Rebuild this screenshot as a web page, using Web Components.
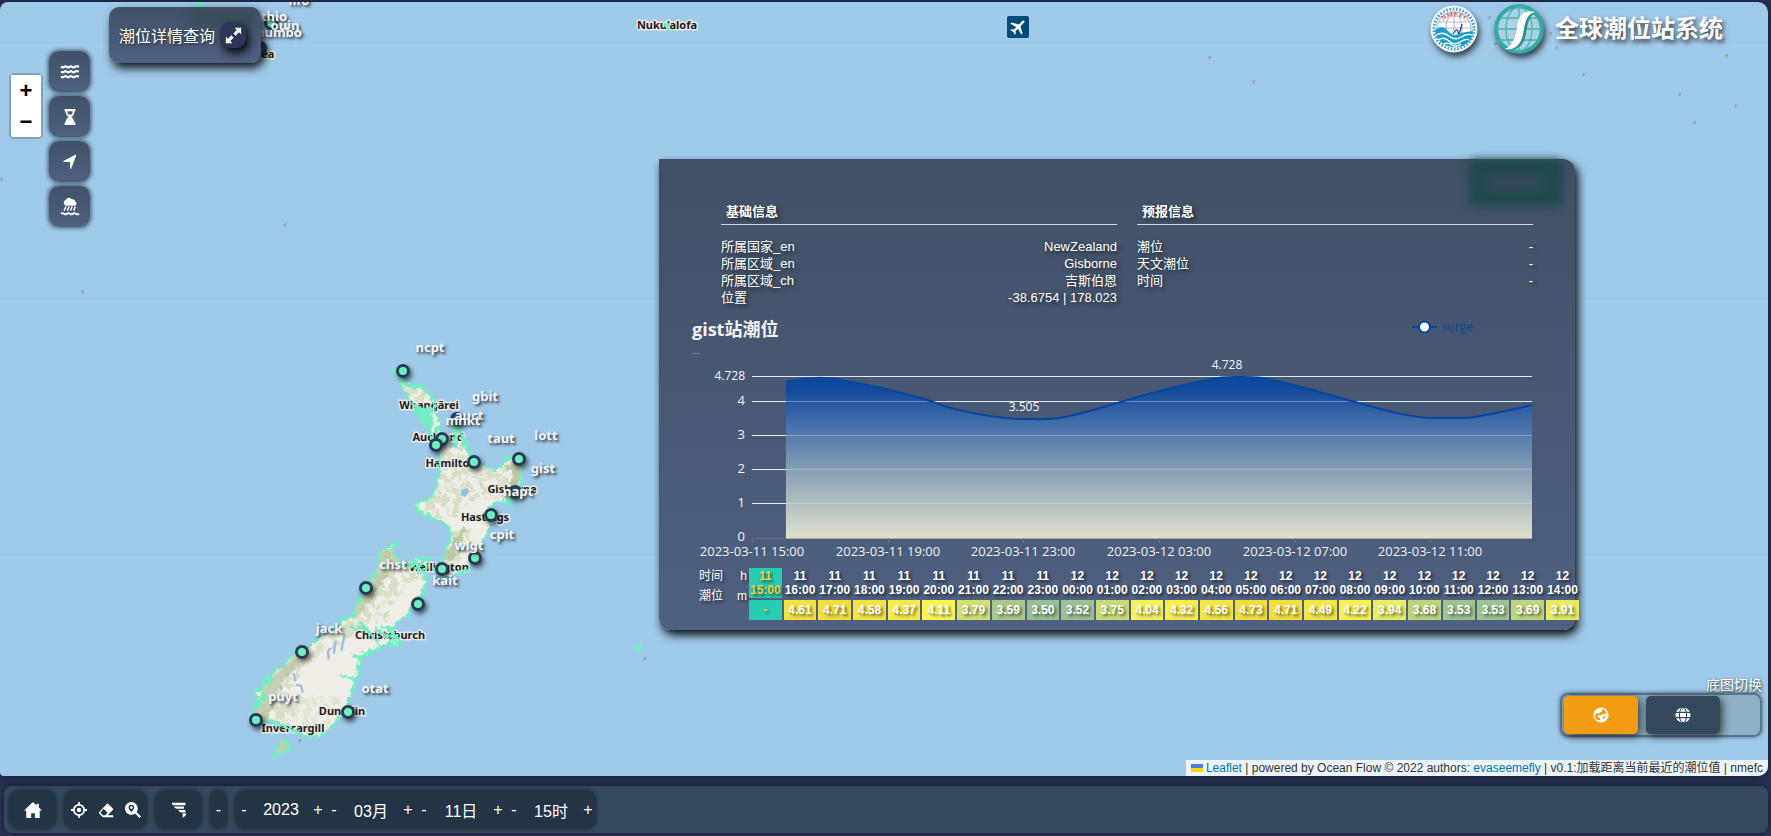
<!DOCTYPE html>
<html lang="zh-CN">
<head>
<meta charset="utf-8">
<title>全球潮位站系统</title>
<style>
  body { margin: 0; background: #2b3355; font-family: "Liberation Sans", "Noto Sans CJK SC", sans-serif; color: #fff; overflow: hidden; }
</style>
</head>
<body>
<tide-app></tide-app>
<script>
const ICONS = {
  waves: '<g fill="none" stroke="#fff" stroke-width="2.400"><path d="M0 4q2 1.800 4 0 1-.8 2 0 2 1.800 4 0 1-.8 2 0 2 1.800 4 0 1-.8 4 0"/><path d="M0 9.500q2 1.800 4 0 1-.8 2 0 2 1.800 4 0 1-.8 2 0 2 1.800 4 0 1-.8 4 0"/><path d="M0 15q2 1.800 4 0 1-.8 2 0 2 1.800 4 0 1-.8 2 0 2 1.800 4 0 1-.8 4 0"/></g>',
  hourglass: '<path fill="#fff" d="M4 1h12v2.500h-1c0 3-1.500 5-3.500 6.500 2 1.500 3.500 3.500 3.500 6.500h1V19H4v-2.500h1c0-3 1.500-5 3.500-6.500C6.500 8.500 5 6.500 5 3.500H4zM7 3.500c0 1.500.5 2.700 1.200 3.700h3.600c.7-1 1.200-2.200 1.200-3.700z"/>',
  arrow: '<path fill="#fff" d="M17 2.500 11.500 17c-.4.900-1.500.7-1.500-.3V10H3.500c-1 0-1.200-1.100-.3-1.500L16 2c.7-.3 1.200 0 1 .5z"/>',
  rain: '<g fill="#fff"><path d="M5.500 8.500a3.300 3.300 0 0 1-.3-6.300 4 4 0 0 1 7-.7 3 3 0 0 1 3.800 2.700 2.300 2.300 0 0 1-.5 4.300z"/></g><g stroke="#fff" stroke-width="1.600" fill="none"><path d="M5.500 9.500 3.500 14M9 9.500 7 14M12.500 9.500l-2 4.500M16 9.500 14 14"/><path stroke-width="2" d="M0 17.500q1.600-1.400 3.300 0t3.300 0 3.400 0 3.300 0 3.300 0 3.400 0"/></g>',
  expand: '<path fill="#fff" d="M11.500 1H19v7.500l-2.500-2.300-4 4-2.700-2.700 4-4zM8.500 19H1v-7.500l2.500 2.300 4-4 2.700 2.700-4 4z"/>',
  home: '<path fill="#fff" d="M10 1 0 10.500h2.500V18c0 .6.400 1 1 1H8v-5.500h4V19h4.500c.6 0 1-.4 1-1v-7.500H20l-3.500-3.400V3H14v2z"/>',
  target: '<g fill="none" stroke="#fff" stroke-width="2.200"><circle cx="10" cy="10" r="6.500"/><path d="M10 0v4M10 16v4M0 10h4M16 10h4"/></g><circle cx="10" cy="10" r="2.800" fill="#fff"/>',
  eraser: '<path fill="#fff" fill-rule="evenodd" d="M11 2.500q1-1 2 0l5.500 5.500q1 1 0 2L12 16.500h7V19H6l-4.500-4.500q-1-1 0-2zM7 8.500l-4 4.800 3.200 3.200h3l2.800-3z"/>',
  search: '<path fill="#fff" fill-rule="evenodd" d="M8 0a8 8 0 1 0 4.500 14.500L18 20l2-2-5.500-5.500A8 8 0 0 0 8 0zm0 3.500c2.200 0 3.500 1.300 3.500 3.300C11.500 9 8 12.500 8 12.500S4.500 9 4.500 6.800c0-2 1.300-3.300 3.500-3.300z"/><circle cx="8" cy="7" r="1.600" fill="#fff"/>',
  tornado: '<path fill="#fff" d="M1 1h17v3H2.500Q1 3 1 1zm2.500 4.500h13q-1 1.500 0 3h-9q-3-.5-4-3zM9 10h8.500l1 3h-6q-2.500-.8-3.500-3zm5 4.500h5q0 3-4.500 5 1-3-.5-5z"/>',
  earth: '<circle cx="10" cy="10" r="9.500" fill="#fff"/><path fill="#f39c12" d="M11 2.500c3 .3 5.500 2.500 6.200 5.200l-2 .3-1.500 1.700-2.500-.7-1.500 1.500-3-.5-.7 2.500 2.500 1 .5 2.500-1.500 1C4 16.300 2 13.500 2.300 10l3-2.500 2.200.5L9 6l1.500.5 1-1.500zM12.500 11.500l3 .5-1 2.500-2 .5z"/>',
  globe: '<circle cx="10" cy="10" r="9.500" fill="#fff"/><g fill="none" stroke="#34495e" stroke-width="1.400"><ellipse cx="10" cy="10" rx="4.500" ry="9.500"/><path d="M0 6.700h20M0 13.300h20"/></g>',
  plane: '<path fill="#fff" transform="rotate(45 10 10)" d="M10-1c1 0 1.500 1.200 1.500 2.500V7l8 4.500v2.200L11.500 11.500V16l2.500 2v1.500L10 18.500 6 19.500V18l2.500-2v-4.500L.5 13.700v-2.200L8.500 7V1.500C8.500.2 9-1 10-1z"/>'
};

const define = (name, template) => customElements.define(name, class extends HTMLElement {
  connectedCallback() {
    if (this.shadowRoot) return;
    this.attachShadow({ mode: 'open' }).innerHTML = typeof template === 'function' ? template(this) : template;
  }
});

/* ---------- small parts ---------- */
define('ui-icon', el => `
  <style>:host{display:block;width:var(--size,18px);height:var(--size,18px)} svg{display:block;width:100%;height:100%;overflow:visible}</style>
  <svg viewBox="0 0 20 20" aria-hidden="true">${ICONS[el.getAttribute('name')]}</svg>`);

define('icon-button', el => `
  <style>
    :host{display:block}
    button{display:grid;place-items:center;width:100%;height:100%;margin:0;padding:0;border:0;border-radius:inherit;background:none;cursor:pointer}
  </style>
  <button type="button" aria-label="${el.getAttribute('label')}"><ui-icon name="${el.getAttribute('icon')}"></ui-icon></button>`);

define('tool-rail', `
  <style>
    :host{display:grid;gap:4px}
    icon-button{width:41px;height:41px;border-radius:10px;background:linear-gradient(#415166,#4f6081);box-shadow:0 0 4px 1px rgba(30,50,60,.75)}
  </style>
  <icon-button icon="waves" label="潮位"></icon-button>
  <icon-button icon="hourglass" label="时间"></icon-button>
  <icon-button icon="arrow" label="定位"></icon-button>
  <icon-button icon="rain" label="降水"></icon-button>`);

define('zoom-control', `
  <style>
    :host{display:grid;border:2px solid rgba(0,0,0,.2);border-radius:5px;background-clip:padding-box}
    button{width:30px;height:31px;padding:0;border:0;background:#fff;color:#000;font:bold 22px/30px "Liberation Sans",sans-serif}
    button:first-child{border-bottom:1px solid #ccc;border-radius:2px 2px 0 0}
    button:last-child{border-radius:0 0 2px 2px}
  </style>
  <button type="button" aria-label="Zoom in">+</button><button type="button" aria-label="Zoom out">−</button>`);

define('query-card', `
  <style>
    :host{display:flex;align-items:center;gap:5px;box-sizing:border-box;width:152px;height:56px;padding:0 10px;border-radius:10px;
      background:linear-gradient(#415166,#4f6081);box-shadow:3px 5px 10px rgba(0,0,0,.9);font-size:16px;white-space:nowrap}
    :host::before{content:"";position:absolute;left:80px;top:4px;width:66px;height:18px;border-radius:9px;background:rgba(38,66,66,.4);filter:blur(5px)}
    span{position:relative;text-shadow:1px 1px 3px #222}
    icon-button{position:relative;--size:17px;flex:none;width:26px;height:26px;border-radius:9px;background:#2c3656;box-shadow:3px 5px 9px rgba(0,0,0,.9)}
  </style>
  <span>潮位详情查询</span><icon-button icon="expand" label="展开"></icon-button>`);

define('brand-header', `
  <style>
    :host{display:flex;align-items:center}
    svg{display:block;filter:drop-shadow(2px 4px 3px rgba(0,0,0,.7))}
    .a{width:48px;height:48px;margin-right:16px}
    .b{width:50px;height:50px;margin-right:11px}
    h1{margin:0 0 4px;font:bold 24px/32px "Noto Sans CJK SC",sans-serif;text-shadow:2px 3px 5px #333}
  </style>
  <svg class="a" viewBox="0 0 48 48" aria-hidden="true">
    <circle cx="24" cy="24" r="23.500" fill="#eef6fb"/>
    <circle cx="24" cy="24" r="20" fill="none" stroke="#4a9cc4" stroke-width="3" stroke-dasharray="1.500 1.800"/>
    <circle cx="24" cy="24" r="17" fill="#fff" stroke="#5aa7cc" stroke-width=".8"/>
    <g fill="none" stroke="#7b93a5" stroke-width=".6"><ellipse cx="24" cy="24" rx="8" ry="16"/><path d="M24 8v18M9 17h30M8 23h32"/></g>
    <path id="arc" d="M13 16Q24 7 36 16" fill="none"/>
    <text fill="#e04a4a" font-family="Liberation Serif, serif" font-size="7" font-weight="bold"><textPath href="#arc">NMEFC</textPath></text>
    <path d="M23 29q4-7 5-2t4-8" fill="none" stroke="#2b3c98" stroke-width="1.300"/>
    <path fill="#1c9cc9" d="M5 25q7-6 13 1t12 2q6-1 13-2c0 10-8 16-18 16S5 35 5 25z"/>
    <g fill="none" stroke="#fff" stroke-width="1.300"><path d="M6 30q7-4 13 1t12 1 11-2M8 35q6-4 11 1t11 1 9-2M14 39q4-2 8 1t9-1"/></g>
  </svg>
  <svg class="b" viewBox="0 0 50 50" aria-hidden="true">
    <circle cx="25" cy="25" r="22.800" fill="#a9d3e4" stroke="#36a9a4" stroke-width="4"/>
    <g fill="none" stroke="#4ab4b0" stroke-width="1.300"><ellipse cx="25" cy="25" rx="13" ry="22"/><path d="M25 3v44M6 14h38M3 25h44M6 36h38"/></g>
    <path fill="#2c8f8c" d="M42 9C30 8 27 14 26 24s-5 18-11 21c10 2 15-5 17-15s2-18 10-21z"/>
    <path fill="#fff" d="M41 8C29 6 24 12 23 23s-5 19-12 22c10 2 16-5 18-15S32 10 41 8z"/>
  </svg>
  <h1>全球潮位站系统</h1>`);

define('basemap-switch', `
  <style>
    :host{display:grid;justify-items:end;font-size:14px;line-height:16px;text-shadow:1px 1px 3px #222}
    .box{display:flex;gap:8px;box-sizing:border-box;width:202px;height:44px;padding:1px 2px;border:2px solid rgba(70,95,115,.7);border-radius:8px;background:rgba(128,150,160,.5);box-shadow:0 0 4px rgba(40,60,70,.7)}
    icon-button{--size:16px;width:74px;height:38px;border-radius:5px;background:#34495e;box-shadow:2px 2px 8px rgba(0,0,0,.7)}
    .on{background:#f39c12}
  </style>
  <span>底图切换</span>
  <div class="box"><icon-button class="on" icon="earth" label="地形"></icon-button><icon-button icon="globe" label="影像"></icon-button></div>`);

define('map-attribution', `
  <style>
    :host{display:flex;align-items:center;height:16px;padding:0 5px;background:rgba(255,255,255,.8);color:#333;font-size:12px;line-height:16px;white-space:pre}
    a{color:#0078a8;text-decoration:none}
    svg{width:12px;height:8px;margin-right:3px}
  </style>
  <svg viewBox="0 0 12 8" aria-hidden="true"><path fill="#4c7be1" d="M0 0h12v4H0z"/><path fill="#ffd500" d="M0 4h12v4H0z"/></svg><a href="#leaflet">Leaflet</a><span> | powered by Ocean Flow © 2022 authors: </span><a href="#author">evaseemefly</a><span> | v0.1:加载距离当前最近的潮位值 | nmefc</span>`);

/* ---------- map ---------- */
const NORTH = 'M38 148 52 152 60 168 70 185 84 182 95 194 110 190 125 205 138 208 150 225 160 238 165 258 158 272 170 290 180 305 176 325 184 345 205 352 210 372 218 382 232 382 230 360 222 335 228 320 240 325 238 340 250 345 256 368 258 385 270 400 285 415 300 430 320 440 345 450 362 442 372 428 385 414 400 405 418 402 432 410 430 440 421 460 422 480 425 500 415 535 400 540 385 542 350 548 334 558 325 570 322 590 330 610 322 640 312 655 305 680 290 700 285 715 270 738 250 758 235 760 215 770 200 768 185 774 175 756 160 750 180 735 192 715 195 690 205 670 215 645 208 625 196 612 180 604 160 598 148 588 125 582 112 572 108 555 120 545 140 540 155 530 166 510 172 480 182 455 172 445 180 425 176 400 170 378 160 355 150 345 148 325 138 310 128 308 120 290 105 272 98 250 82 232 76 215 65 205 66 192 55 172z';
const SOUTH = 'M447 75 460 60 475 52 482 40 507 40 486 52 492 72 504 84 508 108 530 100 540 110 548 92 560 80 575 88 590 82 594 104 580 130 584 142 595 152 580 176 575 195 556 210 545 235 525 265 505 275 488 290 486 305 500 322 514 340 505 352 490 344 465 345 440 358 410 375 396 388 385 412 383 440 372 470 360 500 350 530 338 556 312 580 296 600 280 615 250 620 222 618 206 605 190 603 175 588 145 585 130 570 100 575 80 572 65 555 62 535 85 528 75 510 84 500 78 488 92 478 96 460 110 458 112 440 130 430 140 415 160 410 166 395 185 380 195 365 215 362 240 345 262 328 290 312 320 290 345 265 362 262 375 240 386 208 400 190 410 170 435 130 447 100z';
const STEWART = 'M130 678 142 660 150 632 165 625 172 642 182 655 160 668 140 680z';
const PLACES = [[429,405,'Whangārei'],[438,437,'Auckland'],[451,463,'Hamilton'],[512,489,'Gisborne'],[485,517,'Hastings'],[439,567,'Wellington'],[390,635,'Christchurch'],[342,711,'Dunedin'],[293,728,'Invercargill'],[667,25,"Nuku'alofa"],[251,54,'Nouméa']];
const PINS = [[403,371],[457,419,1],[442,439],[436,445],[474,462],[519,459],[515,492,1],[491,515],[475,558],[442,569],[366,588],[418,604],[302,652],[256,720],[348,712],[271,23],[260,48,1]];
const STATIONS = [[430,347,'ncpt'],[485,396,'gbit'],[469,415,'auct'],[463,420,'mnkt'],[501,438,'taut'],[546,435,'lott'],[543,468,'gist'],[518,491,'napt'],[502,534,'cpit'],[469,545,'wlgt'],[445,580,'kait'],[393,564,'chst'],[329,628,'jack'],[375,688,'otat'],[283,696,'puyt'],[274,16,'thio'],[285,25,'ouin'],[279,32,'numbo'],[299,0,'lifo']];
const ISLETS = [[283,224],[81,291],[1488,17],[1500,19],[1494,43],[1549,33],[1555,47],[1582,74],[1678,94],[1734,105],[1208,57],[1252,81],[1693,122],[1725,55],[0,179],[643,658],[298,740]];

define('station-pin', `
  <style>
    :host{position:absolute;width:8px;height:8px;margin:-7px 0 0 -7px;border:3px solid #2a3c55;border-radius:50%;background:#70efc3;box-shadow:2px 3px 5px rgba(0,0,0,.6)}
    :host([dim]){background:#2f5a63}
  </style>`);
define('station-label', `
  <style>:host{position:absolute;transform:translate(-50%,-50%);color:#f0f6fc;font:bold 13px/16px "Noto Sans",sans-serif;text-shadow:2px 2px 3px #333}</style><slot></slot>`);

define('tide-map', () => `
  <style>
    :host{display:block;position:relative;overflow:hidden;border-radius:8px 10px 10px 4px;background:#a0caea;box-shadow:0 0 12px #16182a}
    .land{position:absolute;left:0;top:-2px;width:1768px;height:776px}
    .pins{position:absolute;left:0;top:-2px}
    ::slotted(*){position:absolute}
    .land text{font:bold 11px "Noto Sans",sans-serif;text-anchor:middle;fill:#1c1c1c;stroke:#ece9e6;stroke-width:3px;paint-order:stroke;stroke-linejoin:round}
  </style>
  <svg class="land" aria-hidden="true">
    <defs>
      <filter id="veg" x="0" y="0" width="1" height="1"><feTurbulence type="fractalNoise" baseFrequency=".05 .04" numOctaves="5" seed="8"/><feColorMatrix values="0 0 0 0 .67 0 0 0 0 .73 0 0 0 0 .56 0 9 0 0 -3.900"/><feComposite in2="SourceGraphic" operator="in"/></filter>
      <filter id="rough" filterUnits="userSpaceOnUse" x="0" y="0" width="640" height="800"><feTurbulence type="fractalNoise" baseFrequency=".07" numOctaves="2" seed="3"/><feDisplacementMap in="SourceGraphic" scale="22" xChannelSelector="R" yChannelSelector="G"/></filter>
      <clipPath id="cn"><path d="${NORTH}"/></clipPath><clipPath id="cs"><path d="${SOUTH}"/></clipPath>
    </defs>
    <path stroke="#a8cfec" d="M0 45.500h1768M0 301.500h1768M0 557.500h1768"/>
    <g transform="translate(380 320) scale(.3333)"><g filter="url(#rough)">
      <path fill="#f1eee8" d="${NORTH}"/>
      <g clip-path="url(#cn)"><g filter="url(#veg)"><path d="M190 400h180l70-30v180l-150-20-60 60-90 10-40-50 30-50zM60 180h100v120H100zM230 310h30v80h-30zM210 640l70-20-50 120-60 30z"/></g>
      <path fill="#b4c19a" opacity=".8" d="M375 440l50-34-5 60-10 60-20-20 10-40z"/><path fill="#b4c19a" opacity=".8" d="M190 710l60-90 12 8-50 100z"/></g></g>
      <path fill="#96bfe0" d="M243 510l18-6 8 10-14 18-12-6z"/>
    </g>
    <g transform="translate(230 530) scale(.3333)"><g filter="url(#rough)">
      <path fill="#f1eee8" d="${SOUTH}"/><path fill="#c5cdac" d="${STEWART}"/>
      <g clip-path="url(#cs)"><g filter="url(#veg)"><path d="M430 60h180v80l-80 20-60 110-60 10-70 60-100 50-60 90 20 90-100 20-60-50 60-90 140-120 170-110z"/><path opacity=".6" d="M180 500h150v110H180z"/></g>
      <path fill="#b4c19a" opacity=".65" d="M447 75l35-20 30 50-40 30-60 90-35 40-60 10-60 30-40 20 110-110 60-40zM62 540l60-90 70-70 20 20-60 60-20 60-20 50-30 10z"/></g></g>
      <g fill="none" stroke="#9cc0dc" stroke-width="7"><path d="M296 388l-2-24 8-10M312 372l4-38M334 362l10-50M192 430l4 24M198 464l16 4 4 20M155 478l-6-12"/></g>
    </g>
    <path fill="#e8e6df" d="M200 6l8 4-2 8-6-6z"/>
    ${ISLETS.map(([x, y]) => `<path fill="#8f9c9e" d="M${x} ${y}l3-1-1 4z"/>`).join('')}
    ${PLACES.map(([x, y, t]) => `<text x="${x}" y="${y + 4}">${t}</text>`).join('')}
    <g transform="translate(380 320) scale(.3333)" fill="none" stroke="#70efc3" stroke-width="7" stroke-linejoin="round"><g filter="url(#rough)">
      <path d="${NORTH}"/><path stroke-width="9" d="M75 190l20 12 25-6 22 22M90 240l36 35 20-10 12 40-25-5-12-25M160 340l20-15M215 350l15 10M225 300l15 20-14 8 16 14M240 330l12 50"/><path fill="#70efc3" d="M105 262l40 18 12 42-22-10zM388 545l6 8-4 8z"/>
    </g></g>
    <g transform="translate(230 530) scale(.3333)" fill="none" stroke="#70efc3" stroke-width="7" stroke-linejoin="round"><g filter="url(#rough)">
      <path d="${SOUTH}"/><path d="${STEWART}"/>
      <path stroke-width="9" d="M366 295l25-2 20 4-22-22M400 290l55 60M440 298l25 18M455 293l38 4M465 322l30-8 18 28-28-14-14 22M366 375l20 10 18-8M398 360l12 14M420 358l8 14M333 432l20 12 30 5M385 214l16-6M370 240l6 22M520 98l20 12 18-20 6 22 24-26M555 110l20 18 18-18M80 480l20-6-6-16 20 2-2-16 20 4M72 520l24-8-10 20M70 570l-5-30M110 468l-8-20M92 500l22 4M150 590l30 0M185 595l12 14"/>
    </g></g>
    <path fill="#70efc3" d="M632 644l5 2 5-4-1 7-3 5-3-6zM663 22l8 2-3 6-3-3zM671 29l4 1-2 4zM193 2l10 1 5 6-5 1-6-4z"/>
    <rect x="1007" y="16" width="22" height="22" rx="2" fill="#024d77"/>
    <g transform="translate(1010 19) scale(.8)">${ICONS.plane}</g>
  </svg>
  <div class="pins">
    ${PINS.map(([x, y, dim]) => `<station-pin ${dim ? 'dim' : ''} style="left:${x}px;top:${y}px"></station-pin>`).join('')}
    ${STATIONS.map(([x, y, t]) => `<station-label style="left:${x}px;top:${y}px">${t}</station-label>`).join('')}
  </div>
  <slot></slot>`);

/* ---------- station detail ---------- */
const LEVELS = [4.61,4.71,4.58,4.37,4.11,3.79,3.59,3.50,3.52,3.75,4.04,4.32,4.56,4.73,4.71,4.49,4.22,3.94,3.68,3.53,3.53,3.69,3.91];
const RAMP = [[3.5,[151,192,146]],[3.68,[188,213,125]],[3.91,[228,235,99]],[4.08,[250,246,86]],[4.73,[242,221,62]]];
const shade = v => {
  let i = 0;
  while (i < RAMP.length - 2 && v > RAMP[i + 1][0]) i++;
  const [a, ca] = RAMP[i], [b, cb] = RAMP[i + 1], k = (v - a) / (b - a);
  return `rgb(${ca.map((c, n) => Math.round(c + (cb[n] - c) * k))})`;
};

define('info-list', el => `
  <style>
    :host{display:block;font-size:13px;text-shadow:2px 2px 4px #222}
    h3{margin:0 0 13px;padding:0 0 2px 5px;border-bottom:1px solid #d5dae0;font-size:13px;line-height:20px}
    dl{margin:0;line-height:17px}
    dl div{display:flex;justify-content:space-between;height:17px}
    dd{margin:0}
  </style>
  <h3>${el.getAttribute('heading')}</h3>
  <dl>${el.getAttribute('rows').split(';').map(r => r.split('=')).map(([k, v]) => `<div><dt>${k}</dt><dd>${v}</dd></div>`).join('')}</dl>`);

define('tide-chart', () => {
  const step = 780 / 23, X = i => 93 + i * step, Y = v => 197 - v * 34;
  const p = LEVELS.map((v, i) => [X(i + 1), Y(v)]);
  const slope = p.map((q, i) => {
    if (!i || i === p.length - 1) return i ? (q[1] - p[i - 1][1]) / step : (p[1][1] - q[1]) / step;
    const a = q[1] - p[i - 1][1], b = p[i + 1][1] - q[1];
    return a * b <= 0 ? 0 : (a + b) / 2 / step;
  });
  const h = step / 3;
  let d = `M${p[0]}`;
  for (let i = 1; i < p.length; i++)
    d += `C${p[i - 1][0] + h} ${p[i - 1][1] + slope[i - 1] * h} ${p[i][0] - h} ${p[i][1] - slope[i] * h} ${p[i]}`;
  const days = ['2023-03-11 15:00','2023-03-11 19:00','2023-03-11 23:00','2023-03-12 03:00','2023-03-12 07:00','2023-03-12 11:00'];
  return `
  <style>
    :host{display:block;font-family:"Open Sans","Noto Sans CJK SC",sans-serif}
    header{display:flex;justify-content:space-between;align-items:start;height:24px;padding:0 102px 0 33px}
    h2{margin:0;font-size:18px;line-height:24px;color:#f2f2f2}
    .key{display:flex;align-items:center;gap:5px;color:#0d479c;font-size:12px;line-height:20px}
    .key svg{width:25px;height:14px}
    .plot{display:block;width:100%;height:auto;font-size:12px;font-weight:500}
  </style>
  <header><h2>gist站潮位</h2><span class="key"><svg viewBox="0 0 25 14" aria-hidden="true"><path stroke="#0547a0" stroke-width="2" d="M0 7h25"/><circle cx="12.500" cy="7" r="5.500" fill="#fff" stroke="#0547a0" stroke-width="2"/></svg>surge</span></header>
  <svg class="plot" viewBox="0 0 916 225" role="img" aria-label="surge">
    <defs><linearGradient id="g" x1="0" y1="0" x2="0" y2="1"><stop stop-color="#0d479c"/><stop offset=".08" stop-color="#134b9b"/><stop offset=".35" stop-color="#5278ac"/><stop offset=".6" stop-color="#8ba3b6"/><stop offset="1" stop-color="#dfe0cd"/></linearGradient></defs>
    <text x="33" y="16" fill="#8a8175" font-size="12">--</text>
    ${[1,2,3,4,4.728].map(v => `<path stroke="#e4e9f2" d="M93 ${Math.round(Y(v)) - .5}H873"/>`).join('')}
    <path fill="url(#g)" d="${d}V197H${p[0][0]}z"/>
    ${[1,2,3,4].map(v => `<path stroke="#d7ecff" opacity=".35" d="M${p[0][0]} ${Math.round(Y(v)) - .5}H873"/>`).join('')}
    <path fill="url(#none)" stroke="#0547a0" stroke-width="2" d="${d}"/>
    <path stroke="#6e7079" d="M93 197.500H127"/><path stroke="#a9aaa0" d="M127 197.500H873"/>
    ${days.map((t, i) => `<path stroke="#6e7079" d="M${Math.round(X(i * 4)) + .5} 197v5"/><text x="${Math.round(X(i * 4))}" y="215" text-anchor="middle" fill="#eef0f4" font-size="13">${t}</text>`).join('')}
    ${[0,1,2,3,4,4.728].map(v => `<text x="86" y="${Math.round(Y(v)) + 3}" text-anchor="end" fill="#f4f6fa" font-size="${v % 1 ? 12 : 13}">${v}</text>`).join('')}
    <text x="365" y="70" text-anchor="middle" fill="#f4f6fa">3.505</text>
    <text x="568" y="28" text-anchor="middle" fill="#f4f6fa">4.728</text>
  </svg>`;
});

define('tide-table', () => {
  const hours = Array.from({ length: 24 }, (_, i) => [i < 9 ? 11 : 12, String((15 + i) % 24).padStart(2, '0') + ':00']);
  return `
  <style>
    :host{display:flex;margin-right:-6px;padding-left:40px;font-size:12px;text-shadow:2px 2px 3px rgba(0,0,0,.6)}
    .names{flex:none;width:48px;line-height:20px}
    .names div{display:flex;justify-content:space-between}
    table{flex:1;min-width:0;table-layout:fixed;border-spacing:2px;text-align:center;font-weight:bold}
    th,td{padding:0}
    th{height:30px;line-height:14px}
    td{height:20px;line-height:20px}
    .now{background:#26cdb2;color:#f5cb3c}
  </style>
  <div class="names"><div><span>时间</span><span>h</span></div><div><span>潮位</span><span>m</span></div></div>
  <table>
    <thead><tr>${hours.map(([d, h], i) => `<th scope="col" ${i ? '' : 'class="now"'}>${d}<br>${h}</th>`).join('')}</tr></thead>
    <tbody><tr><td class="now">-</td>${LEVELS.map(v => `<td style="background:${shade(v)}">${v.toFixed(2)}</td>`).join('')}</tr></tbody>
  </table>`;
});

define('station-panel', `
  <style>
    :host{display:block;box-sizing:border-box;width:916px;max-width:calc(100% - 200px);padding-bottom:8px;border-radius:0 12px 12px 12px;background:linear-gradient(#415166,#4f6081);box-shadow:3px 5px 10px rgba(0,0,0,.95)}
    .info{display:grid;grid-template-columns:1fr 1fr;gap:20px;height:104px;padding:43px 42px 0 62px}
    tide-chart{padding-top:11px}
    .glow{position:absolute;right:12px;top:0;width:94px;height:48px;border-radius:8px;background:#20484f;filter:blur(4px)}
    .glow::after{content:"";position:absolute;left:17px;top:17px;width:58px;height:13px;border-radius:6px;background:#36495a;filter:blur(3px)}
  </style>
  <div class="glow"></div>
  <div class="info">
    <info-list heading="基础信息" rows="所属国家_en=NewZealand;所属区域_en=Gisborne;所属区域_ch=吉斯伯恩;位置=-38.6754 | 178.023"></info-list>
    <info-list heading="预报信息" rows="潮位=-;天文潮位=-;时间=-"></info-list>
  </div>
  <tide-chart></tide-chart>
  <tide-table></tide-table>`);

/* ---------- bottom bar ---------- */
define('date-stepper', `
  <style>
    :host{display:flex;align-items:center;width:90px;font-size:16px}
    span{flex:1;text-align:center;white-space:nowrap}
    button{width:16px;padding:0;border:0;background:none;color:inherit;font:16px/20px "Liberation Sans",sans-serif}
  </style>
  <button type="button" aria-label="减">-</button><span><slot></slot></span><button type="button" aria-label="加">+</button>`);

define('control-bar', `
  <style>
    :host{display:flex;gap:8px;padding:4px 5px;border-radius:8px;background:#34495e;box-shadow:0 0 6px #15172a}
    .group{display:flex;align-items:center;justify-content:center;box-sizing:border-box;height:39px;border-radius:10px;background:#233446;box-shadow:0 0 4px rgba(20,30,40,.8)}
    icon-button{height:39px;width:47px}
    .tools{width:83px}
    .tools icon-button{--size:16px;width:27px}
    .fold{width:17px;border:0;padding:0;color:#fff;font:16px/20px "Liberation Sans",sans-serif}
    .dates{padding:0 0 0 1px}
  </style>
  <div class="group"><icon-button icon="home" label="主页"></icon-button></div>
  <div class="group tools"><icon-button icon="target" label="定位"></icon-button><icon-button icon="eraser" label="清除"></icon-button><icon-button icon="search" label="查找"></icon-button></div>
  <div class="group"><icon-button style="--size:16px" icon="tornado" label="台风"></icon-button></div>
  <button class="group fold" type="button" aria-label="收起">-</button>
  <div class="group dates"><date-stepper>2023</date-stepper><date-stepper>03月</date-stepper><date-stepper>11日</date-stepper><date-stepper>15时</date-stepper></div>`);

define('tide-app', `
  <style>
    :host{display:grid;grid-template-rows:1fr auto;gap:10px;box-sizing:border-box;height:100vh;padding:2px 3px 3px 0}
    control-bar{margin-left:4px}
    zoom-control{left:9px;top:71px}
    tool-rail{left:49px;top:49px}
    query-card{left:109px;top:5px}
    brand-header{right:45px;top:2px}
    station-panel{right:193px;top:157px}
    basemap-switch{right:6px;bottom:39px}
    map-attribution{right:0;bottom:0}
  </style>
  <tide-map>
    <zoom-control></zoom-control><tool-rail></tool-rail><query-card></query-card><brand-header></brand-header>
    <station-panel></station-panel><basemap-switch></basemap-switch><map-attribution></map-attribution>
  </tide-map>
  <control-bar></control-bar>`);
</script>
</body>
</html>
